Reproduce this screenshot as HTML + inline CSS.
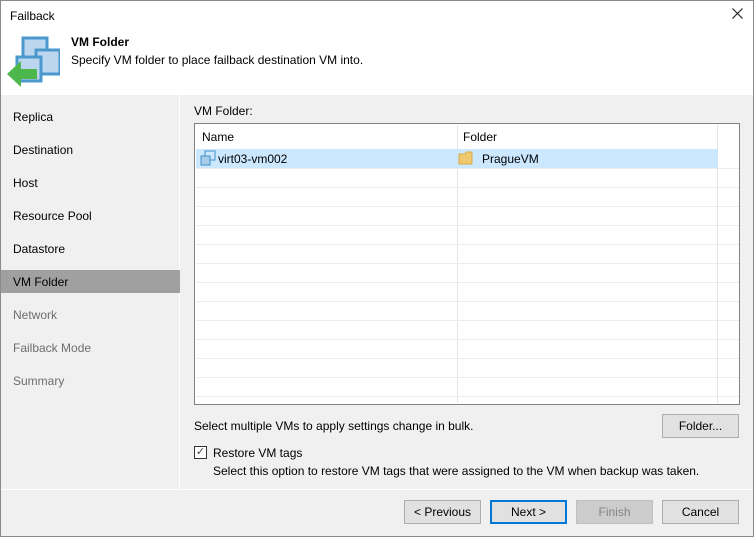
<!DOCTYPE html>
<html><head><style>
*{box-sizing:border-box;margin:0;padding:0}
body{width:754px;height:537px;position:relative;font-family:"Liberation Sans",sans-serif;font-size:12px;color:#000;background:#f0f0f0;overflow:hidden}
.abs{position:absolute}
.win{left:0;top:0;width:754px;height:537px;border:1px solid #8a8a8a}
.hdr{left:1px;top:1px;width:752px;height:94px;background:#fff}
.side{left:1px;top:95px;width:179px;height:394px;background:#f0f0f0;border-right:1px solid #fff}
.si{position:absolute;left:13px;font-size:12px}
.btn{position:absolute;height:24px;border:1px solid #adadad;background:#e1e1e1;text-align:center;line-height:22px;font-size:12px}
.row{position:absolute;left:1px;width:543px;height:1px;background:#ececec}
</style></head><body>
<div class="abs win"></div>
<div class="abs hdr"></div>
<div class="abs" style="left:10px;top:9px">Failback</div>
<svg class="abs" style="left:732px;top:8px" width="11" height="11"><path d="M0.5 0.5L10.5 10.5M10.5 0.5L0.5 10.5" stroke="#222" stroke-width="1.2"/></svg>
<svg class="abs" style="left:5px;top:34px" width="55" height="55">
<rect x="18" y="4" width="24" height="24" fill="#bcd6ef" stroke="#4a98cc" stroke-width="3"/>
<rect x="31" y="16" width="24" height="24" fill="#bcd6ef" stroke="#4a98cc" stroke-width="3"/>
<rect x="12" y="23" width="24" height="24" fill="#bcd6ef" stroke="#4a98cc" stroke-width="3"/>
<path d="M2 40 L16 27 L16 35 L32 35 L32 45 L16 45 L16 53 Z" fill="#4cb84b"/>
</svg>
<div class="abs" style="left:71px;top:35px;font-weight:bold">VM Folder</div>
<div class="abs" style="left:71px;top:53px">Specify VM folder to place failback destination VM into.</div>
<div class="abs side"></div>
<div class="abs" style="left:1px;top:270px;width:179px;height:23px;background:#a0a0a0"></div>
<div class="si" style="top:110px">Replica</div>
<div class="si" style="top:143px">Destination</div>
<div class="si" style="top:176px">Host</div>
<div class="si" style="top:209px">Resource Pool</div>
<div class="si" style="top:242px">Datastore</div>
<div class="si" style="top:275px">VM Folder</div>
<div class="si" style="top:308px;color:#6d6d6d">Network</div>
<div class="si" style="top:341px;color:#6d6d6d">Failback Mode</div>
<div class="si" style="top:374px;color:#6d6d6d">Summary</div>
<div class="abs" style="left:194px;top:104px">VM Folder:</div>
<div class="abs" style="left:194px;top:123px;width:546px;height:282px;background:#fff;border:1px solid #828282">
<div class="abs" style="left:262px;top:1px;width:1px;height:278px;background:#e5e5e5"></div>
<div class="abs" style="left:522px;top:1px;width:1px;height:278px;background:#e5e5e5"></div>
<div class="abs" style="left:1px;top:25px;width:522px;height:19px;background:#cce8ff"></div>
<div class="abs" style="left:7px;top:6px">Name</div>
<div class="abs" style="left:268px;top:6px">Folder</div>
<svg class="abs" style="left:5px;top:26px" width="18" height="17"><rect x="5" y="1" width="10" height="9" fill="#cce8ff" stroke="#3f8fc8"/><rect x="1" y="6" width="9" height="9" fill="#a9cde9" stroke="#3f8fc8"/></svg>
<div class="abs" style="left:23px;top:28px">virt03-vm002</div>
<svg class="abs" style="left:263px;top:26px" width="18" height="16"><path d="M1 4h6l1-2h6v12H1z" fill="#f0c870" stroke="#d8a848"/></svg>
<div class="abs" style="left:287px;top:28px">PragueVM</div>
<div class="row" style="top:44px"></div><div class="row" style="top:63px"></div><div class="row" style="top:82px"></div><div class="row" style="top:101px"></div><div class="row" style="top:120px"></div><div class="row" style="top:139px"></div><div class="row" style="top:158px"></div><div class="row" style="top:177px"></div><div class="row" style="top:196px"></div><div class="row" style="top:215px"></div><div class="row" style="top:234px"></div><div class="row" style="top:253px"></div><div class="row" style="top:272px"></div>
</div>
<div class="abs" style="left:194px;top:419px">Select multiple VMs to apply settings change in bulk.</div>
<div class="btn" style="left:662px;top:414px;width:77px">Folder...</div>
<div class="abs" style="left:194px;top:446px;width:13px;height:13px;border:1px solid #333;background:#fff;font-size:11px;line-height:11px;text-align:center;color:#444">✓</div>
<div class="abs" style="left:213px;top:446px">Restore VM tags</div>
<div class="abs" style="left:213px;top:464px">Select this option to restore VM tags that were assigned to the VM when backup was taken.</div>
<div class="abs" style="left:1px;top:489px;width:752px;height:1px;background:#fff"></div>
<div class="btn" style="left:404px;top:500px;width:77px">&lt; Previous</div>
<div class="btn" style="left:490px;top:500px;width:77px;border:2px solid #0078d7;line-height:20px">Next &gt;</div>
<div class="btn" style="left:576px;top:500px;width:77px;background:#ccc;border-color:#bfbfbf;color:#838383">Finish</div>
<div class="btn" style="left:662px;top:500px;width:77px">Cancel</div>
</body></html>
